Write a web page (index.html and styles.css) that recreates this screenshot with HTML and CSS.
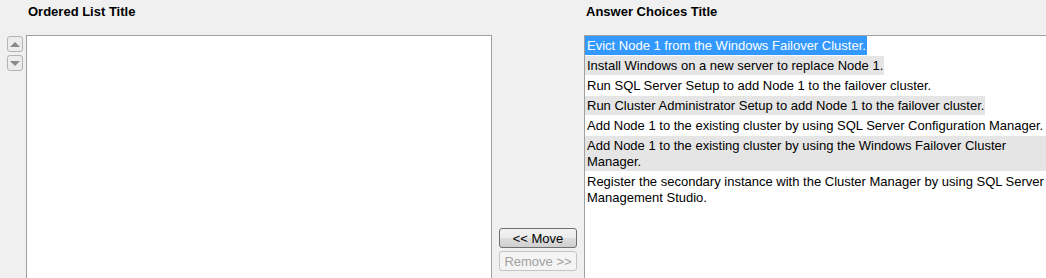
FILE: index.html
```html
<!DOCTYPE html>
<html lang="en">

<head>
    <meta charset="UTF-8">
    <title>Ordered List</title>
    <link rel="stylesheet" href="styles.css">
</head>

<body>
    <div class="ordering">
        <div class="spacer"></div>
        <div class="title title-left">Ordered List Title</div>
        <div class="spacer"></div>
        <div class="title title-right">Answer Choices Title</div>

        <div class="arrows">
            <button class="arrow-btn"><span class="tri tri-up"></span></button>
            <button class="arrow-btn"><span class="tri tri-down"></span></button>
        </div>
        <div class="box box-ordered"></div>
        <div class="middle">
            <button class="btn">&lt;&lt; Move</button>
            <button class="btn" disabled>Remove &gt;&gt;</button>
        </div>
        <div class="box box-choices">
            <div class="choice selected">Evict Node 1 from the Windows Failover Cluster.</div>
            <div class="choice alt">Install Windows on a new server to replace Node 1.</div>
            <div class="choice">Run SQL Server Setup to add Node 1 to the failover cluster.</div>
            <div class="choice alt">Run Cluster Administrator Setup to add Node 1 to the failover cluster.</div>
            <div class="choice">Add Node 1 to the existing cluster by using SQL Server Configuration Manager.</div>
            <div class="choice alt">Add Node 1 to the existing cluster by using the Windows Failover Cluster Manager.</div>
            <div class="choice">Register the secondary instance with the Cluster Manager by using SQL Server Management Studio.</div>
        </div>
    </div>
</body>

</html>
```

FILE: styles.css
```css
html,
body {
    margin: 0;
    padding: 0;
    overflow: hidden;
}

body {
    background-color: #f0f0f0;
    font-family: "Liberation Sans", Arial, sans-serif;
    font-size: 13px;
    color: #000;
}

.ordering {
    display: grid;
    grid-template-columns: 26px 466px 92px 480px;
    grid-template-rows: 35px 243px;
}

.title {
    font-weight: bold;
    padding-top: 4px;
    padding-left: 2px;
    line-height: 16px;
}

.arrows {
    display: flex;
    flex-direction: column;
    align-items: flex-end;
    padding-top: 1px;
    padding-right: 3px;
}

.arrow-btn {
    width: 16px;
    height: 16px;
    margin: 0 0 3px 0;
    padding: 0;
    border: 1px solid #b4b4b4;
    border-radius: 3px;
    background-color: #ececec;
    display: flex;
    align-items: center;
    justify-content: center;
}

.tri {
    width: 0;
    height: 0;
    border-left: 5px solid transparent;
    border-right: 5px solid transparent;
}

.tri-up {
    border-bottom: 5px solid #8a8a8a;
}

.tri-down {
    border-top: 5px solid #8a8a8a;
}

.box {
    background-color: white;
    border-top: 1px solid #a0a0a0;
    border-left: 1px solid #a0a0a0;
}

.box-ordered {
    border-right: 1px solid #a0a0a0;
}

.middle {
    display: flex;
    flex-direction: column;
    align-items: center;
    padding-top: 193px;
}

.btn {
    width: 78px;
    height: 20px;
    margin-bottom: 3px;
    padding: 0;
    font-family: "Liberation Sans", Arial, sans-serif;
    font-size: 13px;
    color: #000;
    border: 1px solid #707070;
    border-radius: 3px;
    background: linear-gradient(#f2f2f2, #ebebeb 50%, #dddddd 51%, #cfcfcf);
}

.btn:disabled {
    color: #a0a0a0;
    border-color: #c4c4c4;
    background: #f4f4f4;
}

.choice {
    width: fit-content;
    max-width: 460px;
    line-height: 16px;
    padding: 2px 1px 1px 2px;
    margin-bottom: 1px;
}

.choice.alt {
    background-color: #e5e5e5;
}

.choice.selected {
    background-color: #3399ff;
    color: white;
}
```
